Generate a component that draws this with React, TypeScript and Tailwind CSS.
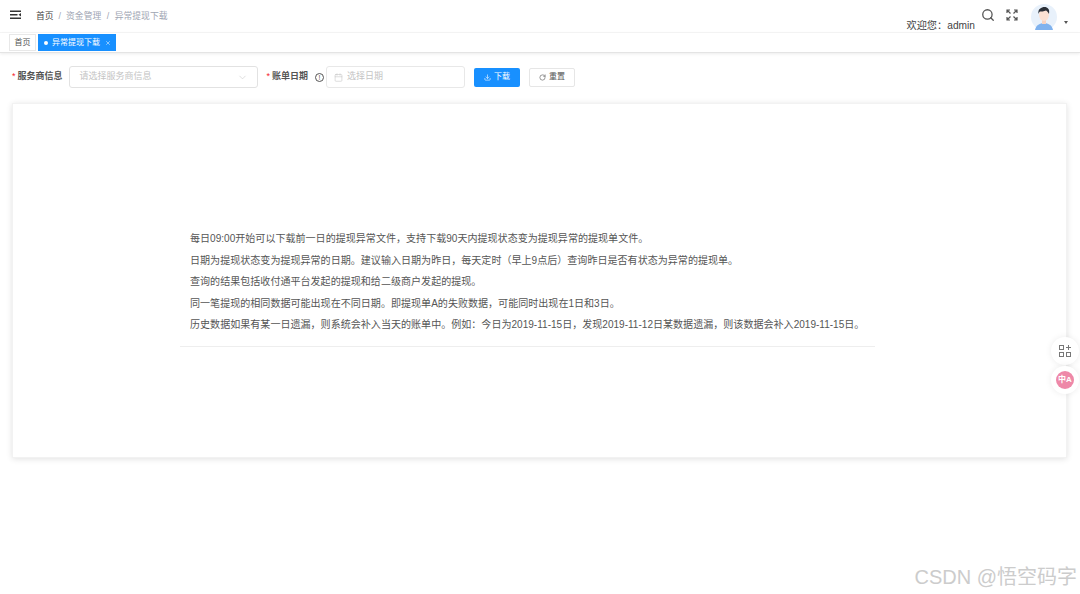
import { ChevronDown, Calendar, Download, RotateCw, Search, X } from "lucide-react";

const notes = [
  "每日09:00开始可以下载前一日的提现异常文件，支持下载90天内提现状态变为提现异常的提现单文件。",
  "日期为提现状态变为提现异常的日期。建议输入日期为昨日，每天定时（早上9点后）查询昨日是否有状态为异常的提现单。",
  "查询的结果包括收付通平台发起的提现和给二级商户发起的提现。",
  "同一笔提现的相同数据可能出现在不同日期。即提现单A的失败数据，可能同时出现在1日和3日。",
  "历史数据如果有某一日遗漏，则系统会补入当天的账单中。例如：今日为2019-11-15日，发现2019-11-12日某数据遗漏，则该数据会补入2019-11-15日。",
];

function Avatar() {
  return (
    <svg width="26" height="26" viewBox="0 0 26 26">
      <circle cx="13" cy="13" r="13" fill="#e8f1fb" />
      <path d="M4 26c1-5 5-7 9-7s8 2 9 7z" fill="#7fb2ee" />
      <rect x="11" y="15" width="4" height="5" fill="#f6d3c2" />
      <ellipse cx="13" cy="11" rx="5" ry="6" fill="#fbe1d3" />
      <path d="M7.5 10c-1-5 3-7 6-7s5.500 2 4.500 7c-1-2-2-3-3-3.500-2 1-5 1-6 1-.8.500-1.200 1.500-1.500 2.500z" fill="#2b3038" />
    </svg>
  );
}

function Hamburger() {
  return (
    <svg width="11" height="10" viewBox="0 0 11 10" fill="#333">
      <rect x="0" y="0.500" width="11" height="1.500" />
      <rect x="0" y="4" width="7.500" height="1.500" />
      <rect x="0" y="7.500" width="11" height="1.500" />
      <path d="M11 3v3.500L8.500 4.750z" />
    </svg>
  );
}

function Fullscreen() {
  return (
    <svg width="12" height="12" viewBox="0 0 12 12" fill="none" stroke="#555" strokeWidth="1.200">
      <path d="M1 4V1h3M1 1l3.500 3.500M11 4V1H8M11 1L7.500 4.500M1 8v3h3M1 11l3.500-3.500M11 8v3H8M11 11L7.500 7.500" />
    </svg>
  );
}

function Widgets() {
  return (
    <svg width="14" height="14" viewBox="0 0 14 14" fill="none" stroke="#777" strokeWidth="1">
      <rect x="1.500" y="1.500" width="4" height="4" />
      <rect x="1.500" y="8.500" width="4" height="4" />
      <rect x="8.500" y="8.500" width="4" height="4" />
      <path d="M10.500 1v5M8 3.500h5" />
    </svg>
  );
}

export default function App() {
  return (
    <div className="relative h-[594px] w-[1080px] overflow-hidden bg-white font-['Liberation_Sans','Noto_Sans_CJK_SC',sans-serif] text-[#555]">
      <header className="flex h-[33px] items-start border-b border-[#f6f6f6]">
        <div className="ml-[10px] mt-[10px]">
          <Hamburger />
        </div>
        <nav className="ml-[15px] mt-[10px] flex items-center text-[8.800px] leading-[12px] text-[#a0a5b3]">
          <span className="text-[#444]">首页</span>
          <span className="mx-[5px]">/</span>
          <span>资金管理</span>
          <span className="mx-[5.500px]">/</span>
          <span>异常提现下载</span>
        </nav>
        <div className="ml-auto flex items-start">
          <span className="mt-[19px] text-[10.200px] leading-[14px] text-[#444]">欢迎您：admin</span>
          <Search className="ml-[6px] mt-[8px] text-[#555]" size={14} strokeWidth={2.2} />
          <div className="ml-[11px] mt-[9px]">
            <Fullscreen />
          </div>
          <div className="ml-[13px] mt-[4px]">
            <Avatar />
          </div>
          <div className="ml-[7px] mr-[12px] mt-[21px] h-0 w-0 border-x-[2.500px] border-t-[3px] border-x-transparent border-t-[#555]" />
        </div>
      </header>

      <div className="flex h-[20px] items-start gap-[2px] border-b border-[#e4e4e4] pl-[9px] pt-[1px] shadow-[0_1px_3px_rgba(0,0,0,0.08)]">
        <div className="flex h-[17px] w-[27px] items-center justify-center border border-[#e8e8e8] text-[8px] text-[#555]">首页</div>
        <div className="flex h-[17px] w-[78px] items-center bg-[#1890ff] pl-[6px] text-[8px] text-white">
          <span className="mr-[4px] h-[4px] w-[4px] rounded-full bg-white" />
          异常提现下载
          <X className="ml-[5px]" size={6} strokeWidth={2} />
        </div>
      </div>

      <form className="mt-[13px] flex h-[22px] items-center pl-[12px] text-[9px] font-bold text-[#555]">
        <label className="flex items-center">
          <span className="mr-[2px] font-normal text-[#f5222d]">*</span>
          服务商信息
        </label>
        <div className="ml-[6px] flex h-[22px] w-[189px] items-center rounded-[3px] border border-[#e2e2e2] pl-[10px] pr-[9px] font-normal text-[#c4c4c4]">
          请选择服务商信息
          <ChevronDown className="ml-auto text-[#c4c4c4]" size={11} strokeWidth={1.200} />
        </div>
        <label className="ml-[9px] flex items-center">
          <span className="mr-[2px] font-normal text-[#f5222d]">*</span>
          账单日期
        </label>
        <span className="ml-[7px] flex h-[9px] w-[9px] items-center justify-center rounded-full border border-[#555] text-[7px] font-normal leading-none">!</span>
        <div className="ml-[2px] flex h-[22px] w-[139px] items-center rounded-[3px] border border-[#e8e8e8] pl-[7px] font-normal text-[#c4c4c4]">
          <Calendar className="mr-[4px] text-[#c4c4c4]" size={9} strokeWidth={1.500} />
          选择日期
        </div>
        <button type="button" className="ml-[9px] flex h-[19px] w-[46px] items-center justify-center gap-[3px] rounded-[2px] bg-[#1890ff] text-[8px] font-normal text-white">
          <Download size={7} strokeWidth={2} />
          下载
        </button>
        <button type="button" className="ml-[9px] flex h-[19px] w-[46px] items-center justify-center gap-[3px] rounded-[2px] border border-[#e6e6e6] text-[8px] font-normal text-[#555]">
          <RotateCw size={7} strokeWidth={2} />
          重置
        </button>
      </form>

      <main className="ml-[12px] mt-[15px] h-[355px] w-[1055px] border border-[#f2f2f2] pt-[124px] shadow-[0_1px_6px_rgba(0,0,0,0.12)]">
        <div className="ml-[167px] w-[695px] text-[10.050px] leading-[21.500px] text-[#555]">
          <div className="pl-[10px]">
            {notes.map((n) => (
              <p key={n} className="whitespace-nowrap">{n}</p>
            ))}
          </div>
          <div className="mt-[10px] border-t border-[#eeeeee]" />
        </div>
      </main>

      {/* floating tool buttons */}
      <div className="absolute right-0 top-[337px] flex w-[30px] flex-col items-center gap-[1px]">
        <div className="flex h-[28px] w-[28px] items-center justify-center rounded-full bg-white shadow-[0_0_6px_rgba(0,0,0,0.08)]">
          <Widgets />
        </div>
        <div className="flex h-[28px] w-[28px] items-center justify-center rounded-full bg-white shadow-[0_0_6px_rgba(0,0,0,0.08)]">
          <div className="flex h-[18px] w-[18px] items-center justify-center rounded-full bg-[#ee88a8] text-[8px] font-bold leading-none text-white">中A</div>
        </div>
      </div>

      <div className="absolute bottom-[4px] right-[3px] text-[20px] leading-[26px] text-[#cccccc]">CSDN @悟空码字</div>
    </div>
  );
}
